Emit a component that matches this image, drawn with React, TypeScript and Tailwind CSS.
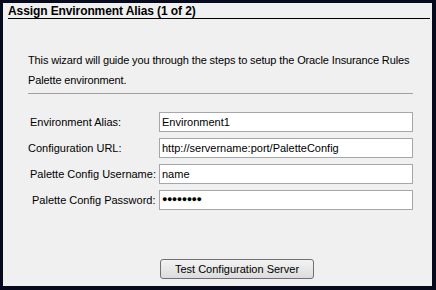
import React from "react";

const fields = [
  { label: "Environment Alias:", value: "Environment1", pad: "pl-[2px]" },
  { label: "Configuration URL:", value: "http://servername:port/PaletteConfig", pad: "pl-0" },
  { label: "Palette Config Username:", value: "name", pad: "pl-[2px]" },
  { label: "Palette Config Password:", value: "●●●●●●●●", pad: "pl-[4px]", secret: true },
];

export default function App() {
  return (
    <div className="h-[290px] w-[436px] bg-[#060a1c] pb-[4px] pl-[3px] pr-[4px] pt-[3px] font-['Liberation_Sans',Arial,sans-serif] text-[11px] text-black">
      <div className="flex h-full flex-col bg-[#f0f0f0]">
        {/* header */}
        <div className="ml-[5px] mr-[2px] mt-[2px] border-b border-black">
          <div className="h-[13px] text-[12px] font-bold leading-[13px] tracking-[-0.1px]">Assign Environment Alias (1 of 2)</div>
        </div>

        <div className="ml-[25px] mt-[31px] w-[385px]">
          <div className="whitespace-nowrap leading-[20px] tracking-[-0.125px]">This wizard will guide you through the steps to setup the Oracle Insurance Rules</div>
          <div className="whitespace-nowrap leading-[20px] tracking-[-0.125px]">Palette environment.</div>
          <div className="mt-[3px] h-px bg-[#a0a0a0]" />
        </div>

        <div className="ml-[25px] mt-[18px] flex flex-col gap-[6px]">
          {fields.map((f) => (
            <div key={f.label} className="flex h-[20px] items-center">
              <div className={`w-[131px] shrink-0 whitespace-nowrap ${f.pad}`}>{f.label}</div>
              <div className="flex h-[20px] w-[254px] items-center border border-[#a5a7ab] bg-white pl-[2px]">
                {f.secret ? (
                  <span className="text-[9px] tracking-[-0.5px]">{f.value}</span>
                ) : (
                  <span>{f.value}</span>
                )}
              </div>
            </div>
          ))}
        </div>

        <div className="ml-[157px] mt-[49px]">
          <button className="flex h-[20px] w-[154px] items-center justify-center rounded-[3px] border border-[#707070] bg-gradient-to-b from-[#f3f3f3] to-[#dcdcdc] text-[11px]">
            Test Configuration Server
          </button>
        </div>
      </div>
    </div>
  );
}
